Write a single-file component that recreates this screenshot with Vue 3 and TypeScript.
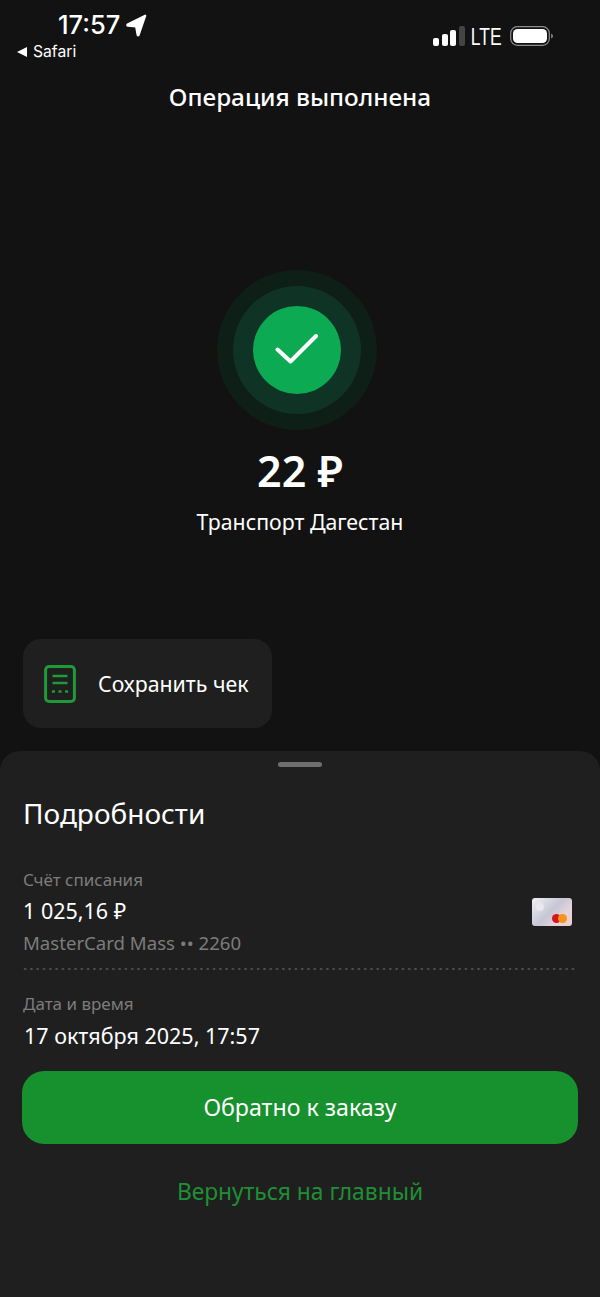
<script setup lang="ts">
const details = [
  { label: 'Счёт списания', value: '1 025,16 ₽', sub: 'MasterCard Mass •• 2260' },
];
</script>

<template>
  <div class="page">
    <header class="status">
      <div class="status-left">
        <div class="time-row">
          <span class="time">17:57</span>
          <svg class="loc" width="21" height="23" viewBox="0 0 20 22"><path d="M18.4 1.6 L1.4 10 Q0.8 11 1.6 11.3 L9.6 11.8 L11 20 Q11.4 21 12 20.2 Z" fill="#fff" stroke="#fff" stroke-width="2" stroke-linejoin="round" /></svg>
        </div>
        <div class="back"><span class="tri"></span>Safari</div>
      </div>
      <div class="status-right">
        <div class="signal">
          <i class="b1"></i><i class="b2"></i><i class="b3"></i><i class="b4"></i>
        </div>
        <span class="lte">LTE</span>
        <svg width="44" height="20" viewBox="0 0 44 20">
          <rect x="0.7" y="0.7" width="38.6" height="18.6" rx="6.5" fill="none" stroke="#8d8d8d" stroke-width="1.2" />
          <rect x="3" y="3" width="34" height="14" rx="4.5" fill="#fff" />
          <path d="M41.2 7.5 Q43 8.5 43 10 Q43 11.5 41.2 12.5 Z" fill="#8d8d8d" />
        </svg>
      </div>
    </header>

    <h1 class="title">Операция выполнена</h1>

    <section class="hero">
      <div class="ring outer">
        <div class="ring middle">
          <div class="ring core">
            <svg width="44" height="34" viewBox="0 0 44 34"><path d="M2.5 16.5 L15.5 28.5 L41 3" fill="none" stroke="#fff" stroke-width="4" stroke-linecap="round" stroke-linejoin="round" /></svg>
          </div>
        </div>
      </div>
      <div class="amount">22 ₽</div>
      <div class="merchant">Транспорт Дагестан</div>
    </section>

    <div class="actions">
      <button class="save">
        <svg width="32" height="38" viewBox="0 0 32 38" fill="none">
          <rect x="1.6" y="1.6" width="28.8" height="34.8" rx="3.5" stroke="#1f9a37" stroke-width="3" />
          <path d="M8.5 11 H23.5 M8.5 18 H23.5" stroke="#1f9a37" stroke-width="2.6" />
          <path d="M8 26.5 H11 M14.5 26.5 H17.5 M21 26.5 H24" stroke="#1f9a37" stroke-width="2.6" />
        </svg>
        <span>Сохранить чек</span>
      </button>
    </div>

    <section class="sheet">
      <div class="handle"></div>
      <h2 class="sheet-title">Подробности</h2>
      <div v-for="d in details" :key="d.label" class="account">
        <div class="account-text">
          <div class="label">{{ d.label }}</div>
          <div class="value">{{ d.value }}</div>
          <div class="sub">{{ d.sub }}</div>
        </div>
        <div class="card"><span class="shine"></span><span class="mc r"></span><span class="mc o"></span></div>
      </div>
      <div class="dots"></div>
      <div class="label date-label">Дата и время</div>
      <div class="value date">17 октября 2025, 17:57</div>
      <button class="primary">Обратно к заказу</button>
      <button class="link">Вернуться на главный</button>
    </section>
  </div>
</template>

<style>
html, body { margin: 0; background: #121212; }
</style>

<style scoped>
.page {
  width: 600px;
  height: 1297px;
  background: #121212;
  color: #fff;
  font-family: "Noto Sans", "Open Sans", sans-serif;
  display: flex;
  flex-direction: column;
  overflow: hidden;
}
.status {
  display: flex;
  justify-content: space-between;
  height: 62px;
  padding: 11px 46px 0 17px;
  box-sizing: border-box;
}
.time-row { display: flex; align-items: center; gap: 6px; padding-left: 41px; height: 28px; }
.time { font-size: 25.5px; line-height: 28px; font-family: Inter, sans-serif; font-weight: 500; }
.back { display: flex; align-items: center; gap: 6px; font-size: 15.7px; line-height: 20px; margin-top: 3px; font-family: Inter, sans-serif; }
.tri { width: 0; height: 0; border-top: 5px solid transparent; border-bottom: 5px solid transparent; border-right: 10px solid #fff; }
.status-right { display: flex; align-items: center; gap: 8px; height: 50px; }
.signal { display: flex; align-items: flex-end; gap: 2.5px; height: 20px; margin-right: -3px; }
.signal i { width: 6px; background: #fff; border-radius: 2px; }
.b1 { height: 8px; } .b2 { height: 12px; } .b3 { height: 16px; }
.signal .b4 { height: 20px; background: #444; }
.lte { font-size: 23px; line-height: 26px; padding-top: 2px; font-family: "Liberation Sans", sans-serif; transform: scaleX(.76); margin: 0 -4px; }
.title { margin: 19px 0 0; text-align: center; font-size: 24.3px; line-height: 32px; font-weight: 500; height: 32px; }
.hero { display: flex; flex-direction: column; align-items: center; margin-top: 157px; }
.ring { border-radius: 50%; display: flex; align-items: center; justify-content: center; }
.outer { width: 160px; height: 160px; background: #0e1f17; margin-right: 6px; }
.middle { width: 128px; height: 128px; background: #0f3324; }
.core { width: 88px; height: 88px; background: #0cab53; }
.amount { font-size: 43px; line-height: 56px; font-weight: 600; margin-top: 13px; }
.merchant { font-size: 21.3px; line-height: 28px; margin-top: 9px; }
.actions { margin-top: 103px; padding-left: 23px; }
.save {
  width: 249px; height: 89px; border: 0; border-radius: 18px;
  background: #1f1f1f; color: #fff; display: flex; align-items: center;
  gap: 22px; padding: 0 0 0 21px; font: inherit; font-size: 21.3px;
}
.sheet {
  margin-top: 23px;
  flex: 1;
  background: #1f1f1f;
  border-radius: 20px 20px 0 0;
  padding: 0 22px;
  display: flex;
  flex-direction: column;
}
.handle { width: 44px; height: 5px; border-radius: 3px; background: #6e6e6e; margin: 11px auto 0; }
.sheet-title { margin: 26px 0 0 1px; font-size: 28px; line-height: 40px; font-weight: 400; height: 40px; }
.account { display: flex; justify-content: space-between; margin: 36px 0 0 1px; }
.label { color: #7c7c7c; font-size: 17px; line-height: 22px; }
.value { font-size: 21.5px; line-height: 28px; margin-top: 6px; }
.sub { color: #7c7c7c; font-size: 18.6px; line-height: 26px; margin-top: 5px; }
.card {
  position: relative; width: 40px; height: 28px; margin: 29px 6px 0 0; border-radius: 3px;
  background: linear-gradient(135deg, #f0f0f4 0%, #c6c6d4 48%, #e4d4dc 72%, #f0cfc8 100%);
}
.shine { position: absolute; left: 4px; top: 5px; width: 8px; height: 8px; border-radius: 50%; background: #e8e8ee; }
.mc { position: absolute; top: 16px; width: 9px; height: 9px; border-radius: 50%; }
.r { left: 20px; background: #d8141c; }
.o { left: 26px; background: #f7931a; }
.dots {
  height: 2px; margin-top: 12px;
  background-image: radial-gradient(circle, #505050 1px, transparent 1.1px);
  background-size: 6.3px 2px;
  background-repeat: repeat-x;
}
.date-label { margin: 23px 0 0 1px; }
.date { margin: 7px 0 0 2px; }
.primary {
  margin-top: 21px; height: 73px; width: 100%; border: 0; border-radius: 22px; padding-bottom: 3px;
  background: #17902e; color: #fff; font: inherit; font-size: 23.2px;
}
.link {
  margin-top: 27px; height: 40px; border: 0; background: none; color: #1f8f33;
  font: inherit; font-size: 22.8px;
}
</style>
